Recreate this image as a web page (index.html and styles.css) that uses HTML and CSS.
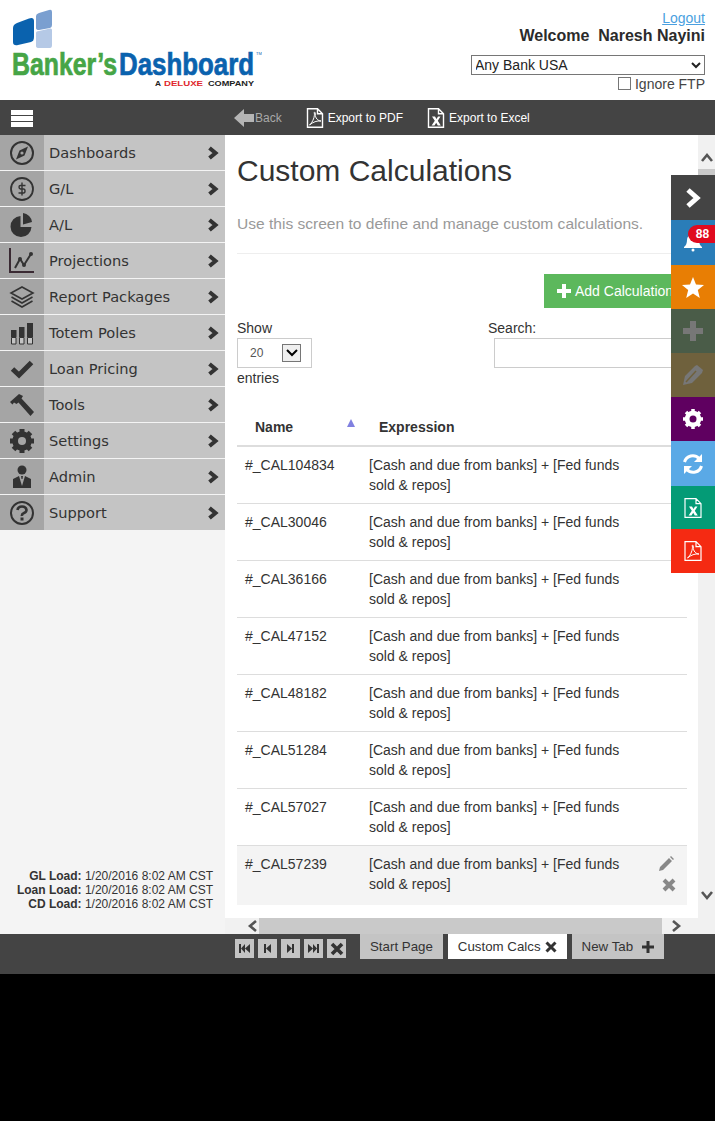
FILE: index.html
```html
<!DOCTYPE html>
<html lang="en">
<head>
    <meta charset="UTF-8">
    <title>Custom Calculations</title>
    <link rel="stylesheet" href="styles.css">
</head>
<body>
<div id="app">
    <div id="top-bar">
        <svg class="logo" width="262" height="92" viewBox="0 0 262 92">
            <path d="M17 23 L29 18.500 Q34 17 34 21 L34 37 Q34 41 31 42 L18 45 Q13 46 13 42 L13 28 Q13 24.500 17 23Z" fill="#0a62ae"/>
            <path d="M39 13 L49 10 Q52 9 52 12 L52 25 Q52 27.500 50 28 L39 30 Q36 30 36 28 L36 16 Q36 14 39 13Z" fill="#7a9fd0"/>
            <path d="M39 31 L50 28.500 Q52 28 52 30 L52 45 Q52 48 50 48 L39 48 Q36 48 36 46 L36 33 Q36 31 39 31Z" fill="#b5c9e6"/>
            <text x="12" y="75" class="logo-word" fill="#46a546" stroke="#46a546" textLength="105" lengthAdjust="spacingAndGlyphs">Banker’s</text>
            <text x="119" y="75" class="logo-word" fill="#0a62ae" stroke="#0a62ae" textLength="135" lengthAdjust="spacingAndGlyphs">Dashboard</text>
            <text x="256" y="55" class="logo-tm" fill="#0a62ae">TM</text>
            <text x="155" y="86" class="logo-sub" fill="#222" textLength="6" lengthAdjust="spacingAndGlyphs">A</text>
            <text x="164" y="86" class="logo-sub" fill="#e0262d" textLength="39" lengthAdjust="spacingAndGlyphs">DELUXE</text>
            <text x="208" y="86" class="logo-sub" fill="#222" textLength="46" lengthAdjust="spacingAndGlyphs">COMPANY</text>
        </svg>
        <div class="user-box">
            <a class="logout" href="#">Logout</a>
            <div class="welcome">Welcome&nbsp; Naresh Nayini</div>
            <select class="bank-select"><option>Any Bank USA</option></select>
            <label class="ftp"><span class="check"></span>Ignore FTP</label>
        </div>
    </div>

    <div id="tool-bar">
        <div class="burger"><span></span><span></span><span></span></div>
        <div class="tool disabled">
            <svg width="20" height="18" viewBox="0 0 20 18"><path d="M0 9 L10 0 V5 H20 V13 H10 V18Z" fill="#b5b5b5"/></svg>
            Back
        </div>
        <div class="tool">
            <svg width="18" height="20" viewBox="0 0 18 20"><path d="M1.5 .8 H11.5 L16.5 5.8 V19.2 H1.5Z M11.5 .8 V5.8 H16.5" fill="none" stroke="#fff" stroke-width="1.4"/><path d="M3.5 17 C7 14 9 8 8.3 5 C8 3.5 9.5 4 9.3 6 C9 10 12 13 15 13 C11 12.5 7 14 3.5 17Z" fill="none" stroke="#fff"/></svg>
            Export to PDF
        </div>
        <div class="tool">
            <svg width="18" height="20" viewBox="0 0 18 20"><path d="M1.5 .8 H11.5 L16.5 5.8 V19.2 H1.5Z M11.5 .8 V5.8 H16.5" fill="none" stroke="#fff" stroke-width="1.4"/><path d="M5 8.5 H8 L9.5 11 L11 8.5 H13.5 L10.8 12.8 L13.8 17.5 H10.8 L9.2 14.8 L7.5 17.5 H4.6 L7.8 12.8Z" fill="#fff"/></svg>
            Export to Excel
        </div>
    </div>

    <div id="main">
        <div class="sidebar">
            <div class="nav-item">
                <span class="nav-icon"><svg width="26" height="26" viewBox="0 0 26 26"><circle cx="13" cy="13" r="11" fill="none" stroke="#333" stroke-width="2"/><path d="M19 6.5 L15.5 15.5 L7 19.5 L10.5 10.5Z" fill="#333"/><circle cx="13" cy="13" r="1.6" fill="#a5a5a5"/></svg></span>
                <span class="nav-label">Dashboards</span>
                <svg class="chev" width="11" height="14" viewBox="0 0 11 14"><path d="M1.5 2 L7.5 7 L1.5 12" fill="none" stroke="#333" stroke-width="4"/></svg>
            </div>
            <div class="nav-item">
                <span class="nav-icon"><svg width="26" height="26" viewBox="0 0 26 26"><circle cx="13" cy="13" r="11" fill="none" stroke="#333" stroke-width="1.8"/><path d="M16.5 9.5 H11.5 Q10 9.5 10 11 T11.5 13 H14.5 Q16 13 16 15 T14.5 17 H9.5 M13 6.5 V19.5" fill="none" stroke="#333" stroke-width="1.4"/></svg></span>
                <span class="nav-label">G/L</span>
                <svg class="chev" width="11" height="14" viewBox="0 0 11 14"><path d="M1.5 2 L7.5 7 L1.5 12" fill="none" stroke="#333" stroke-width="4"/></svg>
            </div>
            <div class="nav-item">
                <span class="nav-icon"><svg width="26" height="26" viewBox="0 0 26 26"><path d="M11.5 4 A10.5 10.5 0 1 0 22.5 15 H11.5Z" fill="#333"/><path d="M14 1 A10 10 0 0 1 23 10 L14 12.5Z" fill="#333"/></svg></span>
                <span class="nav-label">A/L</span>
                <svg class="chev" width="11" height="14" viewBox="0 0 11 14"><path d="M1.5 2 L7.5 7 L1.5 12" fill="none" stroke="#333" stroke-width="4"/></svg>
            </div>
            <div class="nav-item">
                <span class="nav-icon"><svg width="26" height="26" viewBox="0 0 26 26"><path d="M1 0 V24 H25" fill="none" stroke="#3a2a33" stroke-width="2"/><path d="M6 20 L11 11 L15 17 L22 6" fill="none" stroke="#333" stroke-width="2"/><circle cx="11" cy="11" r="2" fill="#333"/><circle cx="15" cy="17" r="2" fill="#333"/><circle cx="22" cy="6" r="2" fill="#333"/></svg></span>
                <span class="nav-label">Projections</span>
                <svg class="chev" width="11" height="14" viewBox="0 0 11 14"><path d="M1.5 2 L7.5 7 L1.5 12" fill="none" stroke="#333" stroke-width="4"/></svg>
            </div>
            <div class="nav-item">
                <span class="nav-icon"><svg width="26" height="26" viewBox="0 0 26 26"><g fill="none" stroke="#333" stroke-width="1.6"><path d="M13 3 L24 9 L13 15 L2 9Z"/><path d="M2.500 13 L13 19 L23.500 13"/><path d="M2.500 17 L13 23 L23.500 17"/></g></svg></span>
                <span class="nav-label">Report Packages</span>
                <svg class="chev" width="11" height="14" viewBox="0 0 11 14"><path d="M1.5 2 L7.5 7 L1.5 12" fill="none" stroke="#333" stroke-width="4"/></svg>
            </div>
            <div class="nav-item">
                <span class="nav-icon"><svg width="24" height="24" viewBox="0 0 24 24"><path d="M1 9 H6.5 V16 H1Z M9 6 H14.500 V16 H9Z M17 2 H23 V16 H17Z" fill="#333"/><path d="M1.500 16.500 H6 V23 H1.500Z M9.500 16.500 H14 V23 H9.500Z M17.500 16.500 H22.500 V23 H17.500Z" fill="#c4c4c4" stroke="#333"/></svg></span>
                <span class="nav-label">Totem Poles</span>
                <svg class="chev" width="11" height="14" viewBox="0 0 11 14"><path d="M1.5 2 L7.5 7 L1.5 12" fill="none" stroke="#333" stroke-width="4"/></svg>
            </div>
            <div class="nav-item">
                <span class="nav-icon"><svg width="24" height="20" viewBox="0 0 24 20"><path d="M2.500 10 L9 16 L21.500 3.500" fill="none" stroke="#333" stroke-width="5"/></svg></span>
                <span class="nav-label">Loan Pricing</span>
                <svg class="chev" width="11" height="14" viewBox="0 0 11 14"><path d="M1.5 2 L7.5 7 L1.5 12" fill="none" stroke="#333" stroke-width="4"/></svg>
            </div>
            <div class="nav-item">
                <span class="nav-icon"><svg width="26" height="24" viewBox="0 0 26 24"><path d="M1 9 L10 1 L14 3 L12.500 5.500 L25 19 L21.500 23 L9.500 9.500 L7.500 11 L5 9.500 L3.500 11.500Z" fill="#333"/></svg></span>
                <span class="nav-label">Tools</span>
                <svg class="chev" width="11" height="14" viewBox="0 0 11 14"><path d="M1.5 2 L7.5 7 L1.5 12" fill="none" stroke="#333" stroke-width="4"/></svg>
            </div>
            <div class="nav-item">
                <span class="nav-icon"><svg width="26" height="26" viewBox="0 0 26 26"><circle cx="13" cy="13" r="7" fill="none" stroke="#333" stroke-width="5.500"/><path d="M13 1 V25 M1 13 H25 M4.500 4.500 L21.500 21.500 M21.500 4.500 L4.500 21.500" stroke="#333" stroke-width="5"/><circle cx="13" cy="13" r="4" fill="#a5a5a5"/></svg></span>
                <span class="nav-label">Settings</span>
                <svg class="chev" width="11" height="14" viewBox="0 0 11 14"><path d="M1.5 2 L7.5 7 L1.5 12" fill="none" stroke="#333" stroke-width="4"/></svg>
            </div>
            <div class="nav-item">
                <span class="nav-icon"><svg width="20" height="24" viewBox="0 0 20 24"><circle cx="10" cy="5" r="4.500" fill="#333"/><path d="M1 23 V14 L7 11 L10 21 L13 11 L19 14 V23Z" fill="#333"/><path d="M9 11 H11 L10.500 14 H9.500Z" fill="#333"/></svg></span>
                <span class="nav-label">Admin</span>
                <svg class="chev" width="11" height="14" viewBox="0 0 11 14"><path d="M1.5 2 L7.5 7 L1.5 12" fill="none" stroke="#333" stroke-width="4"/></svg>
            </div>
            <div class="nav-item">
                <span class="nav-icon"><svg width="26" height="26" viewBox="0 0 26 26"><circle cx="13" cy="13" r="11" fill="none" stroke="#333" stroke-width="2"/><path d="M8.500 10 Q9 6.500 13 6.500 T17.500 10 Q17.500 12 15 13 T13 16" fill="none" stroke="#333" stroke-width="2.600"/><rect x="11.500" y="17.500" width="3" height="3" fill="#333"/></svg></span>
                <span class="nav-label">Support</span>
                <svg class="chev" width="11" height="14" viewBox="0 0 11 14"><path d="M1.5 2 L7.5 7 L1.5 12" fill="none" stroke="#333" stroke-width="4"/></svg>
            </div>

            <div class="load-info">
                <div><b>GL Load:</b> 1/20/2016 8:02 AM CST</div>
                <div><b>Loan Load:</b> 1/20/2016 8:02 AM CST</div>
                <div><b>CD Load:</b> 1/20/2016 8:02 AM CST</div>
            </div>
        </div>

        <div class="pane">
            <div class="pane-left">
                <div class="content">
                    <h1>Custom Calculations</h1>
                    <p class="subtitle">Use this screen to define and manage custom calculations.</p>
                    <div class="add-row">
                        <a class="btn-add" href="#"><svg width="14" height="14" viewBox="0 0 14 14"><path d="M7 0 V14 M0 7 H14" stroke="#fff" stroke-width="4"/></svg>Add Calculation</a>
                    </div>
                    <div class="table-tools">
                        <div class="show-box">
                            <div>Show</div>
                            <div class="len-select">
                                <span>20</span>
                                <span class="len-arrow"><svg width="12" height="8" viewBox="0 0 12 8"><path d="M1 1 L6 6 L11 1" fill="none" stroke="#000" stroke-width="2"/></svg></span>
                            </div>
                            <div>entries</div>
                        </div>
                        <div class="search-box">
                            <div>Search:</div>
                            <input class="search-input" type="text">
                        </div>
                    </div>
                    <table class="calc-table">
                        <colgroup><col class="c-name"><col class="c-expr"><col class="c-act"></colgroup>
                        <thead>
                            <tr>
                                <th class="col-name">Name<span class="sort"></span></th>
                                <th colspan="2" class="col-expr">Expression</th>
                            </tr>
                        </thead>
                        <tbody>
                            <tr><td>#_CAL104834</td><td>[Cash and due from banks] + [Fed funds sold &amp; repos]</td><td></td></tr>
                            <tr><td>#_CAL30046</td><td>[Cash and due from banks] + [Fed funds sold &amp; repos]</td><td></td></tr>
                            <tr><td>#_CAL36166</td><td>[Cash and due from banks] + [Fed funds sold &amp; repos]</td><td></td></tr>
                            <tr><td>#_CAL47152</td><td>[Cash and due from banks] + [Fed funds sold &amp; repos]</td><td></td></tr>
                            <tr><td>#_CAL48182</td><td>[Cash and due from banks] + [Fed funds sold &amp; repos]</td><td></td></tr>
                            <tr><td>#_CAL51284</td><td>[Cash and due from banks] + [Fed funds sold &amp; repos]</td><td></td></tr>
                            <tr><td>#_CAL57027</td><td>[Cash and due from banks] + [Fed funds sold &amp; repos]</td><td></td></tr>
                            <tr class="hover-row">
                                <td>#_CAL57239</td>
                                <td>[Cash and due from banks] + [Fed funds sold &amp; repos]</td>
                                <td class="row-actions">
                                    <svg class="ico-edit" width="16" height="16" viewBox="0 0 16 16"><path d="M1 15 L2 11 L11 2 L14 5 L5 14Z M12 1 L13 0 L16 3 L15 4Z" fill="#888"/></svg>
                                    <svg width="14" height="14" viewBox="0 0 14 14"><path d="M2 2 L12 12 M12 2 L2 12" stroke="#888" stroke-width="4"/></svg>
                                </td>
                            </tr>
                        </tbody>
                    </table>
                </div>
                <div class="hscroll">
                    <svg width="13" height="14" viewBox="0 0 13 14"><path d="M10 2 L4 7 L10 12" fill="none" stroke="#555" stroke-width="2.600"/></svg>
                    <div class="hthumb"></div>
                    <svg width="13" height="14" viewBox="0 0 13 14"><path d="M3 2 L9 7 L3 12" fill="none" stroke="#555" stroke-width="2.600"/></svg>
                </div>
            </div>
            <div class="vscroll">
                <svg width="14" height="13" viewBox="0 0 14 13"><path d="M2 10 L7 4 L12 10" fill="none" stroke="#555" stroke-width="2.600"/></svg>
                <div class="vthumb"></div>
                <svg class="v-down" width="14" height="13" viewBox="0 0 14 13"><path d="M2 3 L7 9 L12 3" fill="none" stroke="#555" stroke-width="2.600"/></svg>
            </div>
        </div>
    </div>

    <div id="tab-bar">
        <div class="tab-nav">
            <span class="tab-btn"><svg width="11" height="9" viewBox="0 0 11 9"><path d="M0 0 H2 V9 H0Z M6 0 V9 L2 4.500Z M11 0 V9 L6 4.500Z" fill="#333"/></svg></span>
            <span class="tab-btn"><svg width="7" height="9" viewBox="0 0 7 9"><path d="M0 0 H2 V9 H0Z M7 0 V9 L2 4.500Z" fill="#333"/></svg></span>
            <span class="tab-btn"><svg width="7" height="9" viewBox="0 0 7 9"><path d="M5 0 H7 V9 H5Z M0 0 V9 L5 4.500Z" fill="#333"/></svg></span>
            <span class="tab-btn"><svg width="11" height="9" viewBox="0 0 11 9"><path d="M9 0 H11 V9 H9Z M5 0 V9 L9 4.500Z M0 0 V9 L5 4.500Z" fill="#333"/></svg></span>
            <span class="tab-btn"><svg width="14" height="14" viewBox="0 0 14 14"><path d="M2 2 L12 12 M12 2 L2 12" stroke="#333" stroke-width="3.600"/></svg></span>
        </div>
        <div class="tab">Start Page</div>
        <div class="tab active">Custom Calcs <svg width="12" height="12" viewBox="0 0 12 12"><path d="M1.500 1.500 L10.500 10.500 M10.500 1.500 L1.500 10.500" stroke="#333" stroke-width="3"/></svg></div>
        <div class="tab new">New Tab <svg width="12" height="12" viewBox="0 0 12 12"><path d="M6 0 V12 M0 6 H12" stroke="#333" stroke-width="3"/></svg></div>
    </div>
</div>

<div class="dock">
    <div class="dock-item d-dark"><svg width="16" height="20" viewBox="0 0 16 20"><path d="M3 2 L12 10 L3 18" fill="none" stroke="#fff" stroke-width="5"/></svg></div>
    <div class="dock-item d-blue">
        <svg class="bell" width="20" height="20" viewBox="0 0 20 20"><path d="M1 15 Q4 13 4 8 Q4 3 10 3 Q16 3 16 8 Q16 13 19 15 V16 H1Z" fill="#fff"/><circle cx="10" cy="18" r="1.500" fill="#fff"/></svg>
        <span class="badge">88</span>
    </div>
    <div class="dock-item d-orange"><svg width="22" height="21" viewBox="0 0 22 21"><path d="M11 0 L14 7.500 L22 8 L15.800 13 L17.800 21 L11 16.500 L4.200 21 L6.200 13 L0 8 L8 7.500Z" fill="#fff"/></svg></div>
    <div class="dock-item d-green"><svg width="20" height="20" viewBox="0 0 20 20"><path d="M10 0 V20 M0 10 H20" stroke="#777" stroke-width="6"/></svg></div>
    <div class="dock-item d-olive"><svg width="20" height="20" viewBox="0 0 20 20"><path d="M0 20 L2 11 L12 1 L14 0 L20 5 L19 8 L9 18Z" fill="#777"/><path d="M3 17 L13 6" stroke="#6f613d" stroke-width="1.500"/></svg></div>
    <div class="dock-item d-purple"><svg width="20" height="20" viewBox="0 0 20 20"><circle cx="10" cy="10" r="6" fill="none" stroke="#fff" stroke-width="4.500"/><path d="M10 0 V20 M0 10 H20 M3 3 L17 17 M17 3 L3 17" stroke="#fff" stroke-width="3.500"/><circle cx="10" cy="10" r="3.500" fill="#5f0060"/></svg></div>
    <div class="dock-item d-sky"><svg width="20" height="20" viewBox="0 0 20 20"><path d="M1.500 8 A8.500 8.500 0 0 1 16 4.500" fill="none" stroke="#fff" stroke-width="3"/><path d="M19 0 V8 H11Z" fill="#fff"/><path d="M18.500 12 A8.500 8.500 0 0 1 4 15.500" fill="none" stroke="#fff" stroke-width="3"/><path d="M1 20 V12 H9Z" fill="#fff"/></svg></div>
    <div class="dock-item d-teal"><svg width="18" height="20" viewBox="0 0 18 20"><path d="M1 .7 H12 L17 5.700 V19.300 H1Z M12 .7 V5.700 H17" fill="none" stroke="#fff" stroke-width="1.200"/><path d="M5 8.500 H8 L9.500 11 L11 8.500 H13.500 L10.800 12.800 L13.800 17.500 H10.800 L9.200 14.800 L7.500 17.500 H4.600 L7.800 12.800Z" fill="#fff"/></svg></div>
    <div class="dock-item d-red"><svg width="18" height="20" viewBox="0 0 18 20"><path d="M1 .7 H12 L17 5.700 V19.300 H1Z M12 .7 V5.700 H17" fill="none" stroke="#fff" stroke-width="1.200"/><path d="M3.500 17 C7 14 9 8 8.300 5 C8 3.500 9.500 4 9.300 6 C9 10 12 13 15 13 C11 12.500 7 14 3.500 17Z" fill="none" stroke="#fff"/></svg></div>
</div>
</body>
</html>
```

FILE: styles.css
```css
html, body {
    margin: 0;
    height: 100%;
    background-color: #000;
    overflow: hidden;
}

body {
    font-family: "Liberation Sans", Arial, sans-serif;
    font-size: 14px;
    color: #333;
    position: relative;
}

#app {
    height: 974px;
    display: flex;
    flex-direction: column;
    background-color: #fff;
}

/* header */
#top-bar {
    height: 100px;
    flex-shrink: 0;
    display: flex;
    justify-content: space-between;
    background-color: #fff;
}

.logo {
    display: block;
}

.logo-word {
    font-family: "Liberation Sans Narrow", "Liberation Sans", sans-serif;
    font-weight: bold;
    font-size: 31px;
    stroke-width: .7px;
}

.logo-tm {
    font-size: 4px;
}

.logo-sub {
    font-weight: bold;
    font-size: 8px;
}

.user-box {
    display: flex;
    flex-direction: column;
    align-items: flex-end;
    padding: 10px 10px 0 0;
}

.logout {
    color: #4a9fe0;
    font-size: 14px;
    line-height: 16px;
}

.welcome {
    font-weight: bold;
    font-size: 16px;
    line-height: 18px;
    margin-top: 1px;
    color: #2b2b2b;
}

.bank-select {
    width: 234px;
    height: 20px;
    margin-top: 10px;
    font-family: "Liberation Sans", Arial, sans-serif;
    font-size: 14px;
    line-height: 18px;
    color: #222;
    background-color: #fff;
    border: 1px solid #767676;
    border-radius: 0;
    padding: 0 0 1px;
    text-indent: -1px;
}

.ftp {
    display: flex;
    align-items: center;
    line-height: 18px;
    color: #444;
}

.check {
    width: 11px;
    height: 11px;
    border: 1px solid #767676;
    margin-right: 4px;
    margin-top: -2px;
}

/* toolbar */
#tool-bar {
    height: 35px;
    flex-shrink: 0;
    background-color: #444;
    display: flex;
    align-items: center;
    color: #fff;
    font-size: 12px;
}

.burger {
    width: 22px;
    margin: 1px 201px 0 11px;
    display: flex;
    flex-direction: column;
    gap: 1px;
}

.burger span {
    height: 5px;
    background-color: #fff;
}

.tool {
    display: flex;
    align-items: center;
    gap: 4px;
    margin-left: 24px;
}

.tool.disabled {
    color: #a9a9a9;
    gap: 1px;
    margin-left: 0;
}

/* main */
#main {
    flex: 1;
    display: flex;
    min-height: 0;
}

.sidebar {
    width: 225px;
    flex-shrink: 0;
    background-color: #f4f4f4;
    display: flex;
    flex-direction: column;
}

.nav-item {
    height: 35px;
    flex-shrink: 0;
    margin-bottom: 1px;
    background-color: #c4c4c4;
    display: flex;
    align-items: center;
    font-family: "DejaVu Sans", Tahoma, sans-serif;
    font-size: 14.6px;
    color: #333;
}

.nav-icon {
    width: 44px;
    height: 100%;
    background-color: #a5a5a5;
    display: flex;
    align-items: center;
    justify-content: center;
    margin-right: 5px;
    flex-shrink: 0;
}

.nav-label {
    flex: 1;
}

.chev {
    margin-right: 6px;
}

.load-info {
    margin-top: auto;
    padding: 0 12px 23px 0;
    text-align: right;
    font-size: 12px;
    line-height: 14px;
    color: #333;
}

.pane {
    flex: 1;
    display: flex;
    min-width: 0;
}

.pane-left {
    flex: 1;
    min-width: 0;
    display: flex;
    flex-direction: column;
}

.content {
    flex: 1;
    min-height: 0;
    overflow: hidden;
    background-color: #fff;
    padding: 0 11px 0 12px;
}

h1 {
    font-weight: normal;
    font-size: 30px;
    line-height: 34px;
    margin: 19px 0 0;
}

.subtitle {
    margin: 27px 0 0;
    padding-bottom: 20px;
    font-size: 15.55px;
    line-height: 18px;
    color: #999;
    border-bottom: 1px solid #eee;
    white-space: nowrap;
}

.add-row {
    display: flex;
    justify-content: flex-end;
    margin-top: 20px;
}

.btn-add {
    width: 143px;
    height: 34px;
    box-sizing: border-box;
    padding-left: 13px;
    display: flex;
    align-items: center;
    gap: 4px;
    background-color: #5cb85c;
    color: #fff;
    text-decoration: none;
    white-space: nowrap;
    overflow: hidden;
}

.table-tools {
    display: flex;
    justify-content: space-between;
    margin-top: 12px;
    height: 88px;
    line-height: 16px;
}

.len-select {
    width: 75px;
    height: 30px;
    margin: 2px 0;
    box-sizing: border-box;
    border: 1px solid #ccc;
    display: flex;
    align-items: center;
    justify-content: space-between;
    padding: 0 10px 0 12px;
    font-size: 12px;
    color: #555;
}

.len-arrow {
    width: 19px;
    height: 18px;
    box-sizing: border-box;
    border: 1px solid #767676;
    background-color: #efefef;
    display: flex;
    align-items: center;
    justify-content: center;
}

.search-box {
    width: 199px;
}

.search-input {
    display: block;
    width: 193px;
    height: 30px;
    margin: 2px 0 0 6px;
    box-sizing: border-box;
    border: 1px solid #ccc;
    padding: 0;
}

.calc-table {
    width: 450px;
    border-collapse: collapse;
    table-layout: fixed;
}

.c-name { width: 124px; }
.c-expr { width: 270px; }
.c-act { width: 56px; }

.calc-table th {
    height: 37px;
    padding: 0;
    text-align: left;
    font-weight: bold;
    border-bottom: 2px solid #ddd;
    position: relative;
}

.calc-table th.col-name,
.calc-table th.col-expr {
    padding-left: 18px;
}

.sort {
    position: absolute;
    left: 110px;
    top: 11px;
    width: 0;
    height: 0;
    border-left: 4px solid transparent;
    border-right: 4px solid transparent;
    border-bottom: 8px solid #8080e0;
}

.calc-table td {
    height: 48px;
    padding: 8px 8px 0;
    line-height: 20px;
    vertical-align: top;
    border-bottom: 1px solid #ddd;
}

.calc-table .hover-row td {
    background-color: #f4f4f4;
    border-bottom: 0;
    height: 51px;
}

.calc-table .hover-row .row-actions {
    height: auto;
    padding: 10px 11px 0 0;
}

.row-actions svg {
    display: block;
    margin: 6px 0 0 auto;
}

.row-actions .ico-edit {
    margin: 0 2px 0 auto;
}

.hscroll {
    height: 16px;
    flex-shrink: 0;
    background-color: #f1f1f1;
    display: flex;
    align-items: center;
    padding-left: 21px;
    padding-right: 15px;
}

.hthumb {
    flex: 1;
    height: 16px;
    background-color: #c9c9c9;
}

.hthumb + svg {
    margin-left: 8px;
}

.vscroll {
    width: 17px;
    background-color: #f1f1f1;
    display: flex;
    flex-direction: column;
    align-items: center;
    padding-top: 16px;
    box-sizing: border-box;
}

.vthumb {
    width: 100%;
    height: 200px;
    background-color: #c9c9c9;
    margin-top: 5px;
}

.v-down {
    margin-top: auto;
    margin-bottom: 32px;
}

/* bottom tabs */
#tab-bar {
    height: 40px;
    flex-shrink: 0;
    background-color: #444;
    display: flex;
    align-items: flex-start;
    font-size: 13.3px;
}

.tab-nav {
    display: flex;
    gap: 4px;
    margin: 5px 14px 0 235px;
}

.tab-btn {
    width: 19px;
    height: 19px;
    background-color: #c4c4c4;
    display: flex;
    align-items: center;
    justify-content: center;
}

.tab {
    height: 25px;
    line-height: 25px;
    padding: 0 10px;
    background-color: #c4c4c4;
    margin-right: 5px;
    display: flex;
    align-items: center;
    gap: 4px;
}

.tab.active {
    background-color: #fff;
}

.tab.new {
    gap: 9px;
    padding-right: 10px;
}

/* floating dock */
.dock {
    position: absolute;
    left: 671px;
    top: 175px;
    width: 44px;
}

.dock-item {
    height: 44px;
    display: flex;
    align-items: center;
    justify-content: center;
    position: relative;
}

.d-dark { background-color: #444; height: 45px; }
.d-blue { background-color: #2a7db8; height: 45px; }
.d-orange { background-color: #e87e04; }
.d-green { background-color: #4a5c48; }
.d-olive { background-color: #6f613d; }
.d-purple { background-color: #5f0060; }
.d-sky { background-color: #5aa9e6; height: 45px; }
.d-teal { background-color: #049b76; height: 43px; }
.d-red { background-color: #f52a12; }

.bell {
    margin-top: -1px;
}

.badge {
    position: absolute;
    right: 0;
    top: 5px;
    width: 25px;
    padding-left: 2px;
    height: 18px;
    border-radius: 9px 0 0 9px;
    background-color: #e00a1f;
    color: #fff;
    font-size: 12px;
    font-weight: bold;
    line-height: 18px;
    text-align: center;
}
```
